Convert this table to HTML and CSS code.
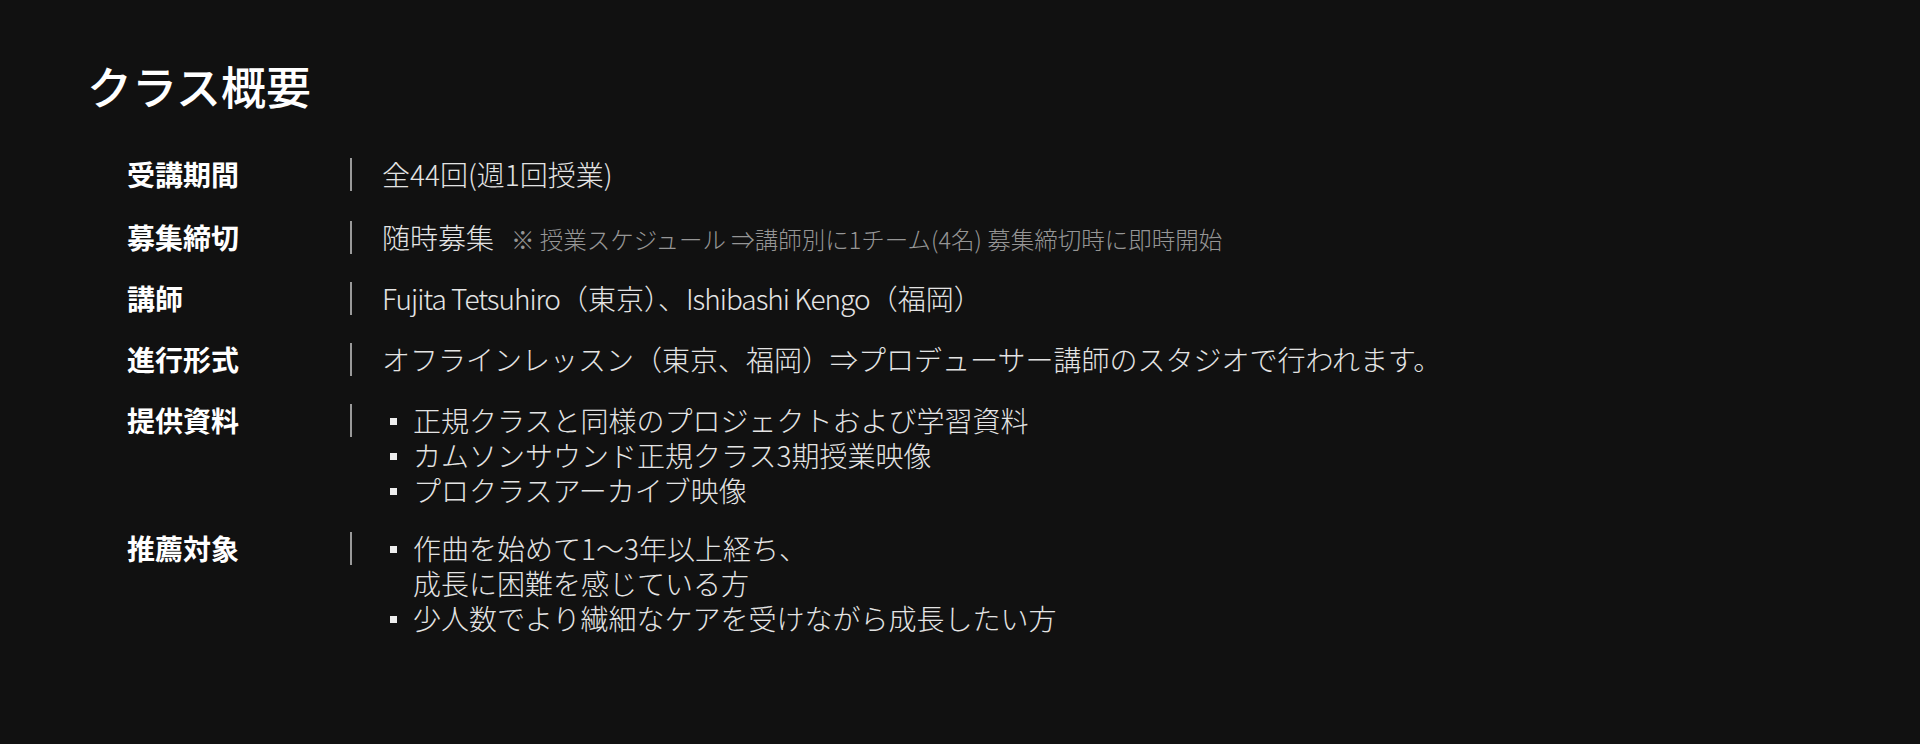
FILE: index.html
```html
<!DOCTYPE html>
<html lang="ja">
<head>
<meta charset="utf-8">
<title>クラス概要</title>
<link rel="stylesheet" href="styles.css">
</head>
<body>
<section class="overview">
  <h2 class="overview-title">クラス概要</h2>
  <dl class="overview-list">
    <div class="row">
      <dt class="label">受講期間</dt>
      <dd class="value">全44回(週1回授業)</dd>
    </div>
    <div class="row row-note">
      <dt class="label">募集締切</dt>
      <dd class="value">随時募集<span class="note">※ 授業スケジュール ⇒講師別に1チーム(4名) 募集締切時に即時開始</span></dd>
    </div>
    <div class="row">
      <dt class="label">講師</dt>
      <dd class="value"><span class="latin">Fujita Tetsuhiro</span>（東京）、<span class="latin">Ishibashi Kengo</span>（福岡）</dd>
    </div>
    <div class="row">
      <dt class="label">進行形式</dt>
      <dd class="value">オフラインレッスン（東京、福岡）⇒プロデューサー講師のスタジオで行われます。</dd>
    </div>
    <div class="row">
      <dt class="label">提供資料</dt>
      <dd class="value">
        <ul class="bullets">
          <li>正規クラスと同様のプロジェクトおよび学習資料</li>
          <li>カムソンサウンド正規クラス3期授業映像</li>
          <li>プロクラスアーカイブ映像</li>
        </ul>
      </dd>
    </div>
    <div class="row row-last">
      <dt class="label">推薦対象</dt>
      <dd class="value">
        <ul class="bullets">
          <li>作曲を始めて1〜3年以上経ち、<br>成長に困難を感じている方</li>
          <li>少人数でより繊細なケアを受けながら成長したい方</li>
        </ul>
      </dd>
    </div>
  </dl>
</section>
</body>
</html>
```
FILE: styles.css
```css
html, body {
  margin: 0;
  padding: 0;
}
body {
  background: #111111;
  color: #ffffff;
  font-family: "Noto Sans CJK JP", "Noto Sans", sans-serif;
  width: 1920px;
  height: 744px;
  overflow: hidden;
}
.overview {
  padding: 59px 0 0 87px;
}
.overview-title {
  margin: 0;
  font-size: 45px;
  line-height: 54px;
  font-weight: 500;
  color: #ffffff;
}
.overview-list {
  margin: 44px 0 0 40px;
  padding: 0;
  display: flex;
  flex-direction: column;
  gap: 26px;
}
.row {
  display: grid;
  grid-template-columns: 223px 2px 1fr;
  font-size: 28px;
  line-height: 35px;
}
.row-note {
  margin-top: 2px;
}
.row-last {
  margin-top: -3px;
}
.row::before {
  content: "";
  grid-column: 2;
  grid-row: 1;
  width: 2px;
  height: 33px;
  margin-top: 1px;
  background: #9a9a9a;
}
.label {
  grid-column: 1;
  grid-row: 1;
  margin: 0;
  font-weight: 700;
  color: #ffffff;
}
.value {
  grid-column: 3;
  grid-row: 1;
  margin: 0 0 0 30px;
  font-family: "Noto Sans CJK JP Light", "Noto Sans CJK JP", "Noto Sans", sans-serif;
  font-weight: 300;
  color: #e4e4e4;
}
.latin {
  letter-spacing: -1px;
}
.note {
  margin-left: 17px;
  font-size: 23.5px;
  line-height: 30px;
  color: #969696;
}
.bullets {
  list-style: none;
  margin: 0;
  padding: 0 0 0 8px;
}
.bullets li {
  display: flex;
  align-items: flex-start;
}
.bullets li::before {
  content: "";
  flex: none;
  width: 7px;
  height: 7px;
  margin: 15px 16px 0 0;
  background: #eeeeee;
}
```
